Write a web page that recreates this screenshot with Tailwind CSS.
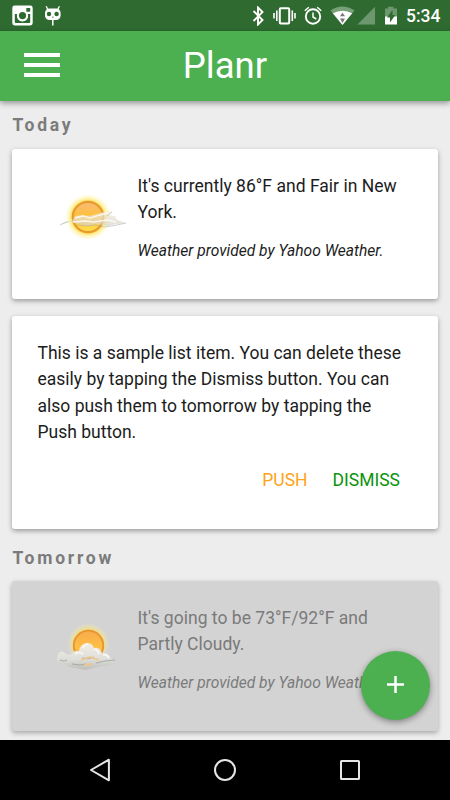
<!DOCTYPE html>
<html lang="en">
<head>
<meta charset="utf-8">
<title>Planr</title>
<script src="https://cdn.jsdelivr.net/npm/@tailwindcss/browser@4"></script>
</head>
<body class="overflow-hidden bg-black font-[Roboto,sans-serif]">
<div class="relative flex h-[800px] w-[450px] flex-col overflow-hidden bg-[#ededed]">

  <!-- Status bar -->
  <div class="flex h-[31px] shrink-0 items-center justify-between bg-[#2f6b31] pr-[10px] pl-3 text-white">
    <div class="flex items-center gap-[11px]">
      <svg class="h-[21px] w-[21px]" viewBox="0 0 21 21">
        <rect x="0.3" y="0.5" width="20.4" height="20" rx="2.4" fill="#fff"/>
        <path d="M2.8 9h2.8a5.3 5.3 0 1 0 9.8 0h2.8v8.1a1 1 0 0 1-1 1H3.800a1 1 0 0 1-1-1z" fill="#2f6b31"/>
        <circle cx="10.5" cy="10.800" r="5.600" fill="#fff"/>
        <circle cx="10.500" cy="10.600" r="3.600" fill="#2f6b31"/>
        <rect x="14.300" y="3" width="3.900" height="3.700" rx=".5" fill="#2f6b31"/>
      </svg>
      <svg class="h-[21px] w-[18px]" viewBox="0 0 18 21">
        <path d="M2.200 1.200l2 4M15.400 1.200l-2 4" stroke="#fff" stroke-width="1.300" fill="none"/>
        <rect x="1" y="3.500" width="15.600" height="11.500" rx="4.500" fill="#fff"/>
        <path d="M8.800 14v6.400" stroke="#fff" stroke-width="1.500"/>
        <circle cx="5" cy="9" r="2.200" fill="#2f6b31"/>
        <circle cx="12.600" cy="9" r="2.200" fill="#2f6b31"/>
        <path d="M8 12.200h1.600" stroke="#2f6b31" stroke-width=".8"/>
      </svg>
    </div>
    <div class="flex items-center">
      <svg class="h-[20px] w-[146px]" viewBox="252 6 146 20">
        <path d="M253.500 11l9 9-4.500 4.500V7.500l4.500 4.500-9 9" fill="none" stroke="#fff" stroke-width="1.900"/>
        <rect x="279.800" y="8.300" width="9.400" height="15.200" rx="1" fill="none" stroke="#fff" stroke-width="2"/>
        <path d="M276.800 10.500v10.500M274 13v5.500M292.300 10.500v10.500M295 13v5.500" stroke="#fff" stroke-width="1.600"/>
        <circle cx="313" cy="16.500" r="7.200" fill="none" stroke="#fff" stroke-width="1.900"/>
        <path d="M313 12.500v4.500l3.300 2M304.800 10.700l4-3.500M321.200 10.700l-4-3.500" fill="none" stroke="#fff" stroke-width="1.500"/>
        <path d="M330.500 10.500q12-8 24 0L342.500 25z" fill="#779f78"/>
        <path d="M332.800 13.300q9.700-5.200 19.400 0L342.500 25z" fill="#fff"/>
        <path d="M342.500 12.800l2.500 3.500h-5zM342.500 23l2.500-4.500h-5z" fill="#777"/>
        <path d="M375 6.800V24.500H357.500z" fill="#6d976f"/>
        <path d="M388 6.800h5.500v1.700h3.500V17h-12V8.500h3z" fill="#6d976f"/>
        <path d="M385 16.500h12V24.500h-12z" fill="#fff"/>
        <path d="M392.500 10l-5.500 7.500h3v5l5.300-7.500h-2.800z" fill="#2f6b31"/>
      </svg>
      <span class="ml-[8px] w-[34px] text-[17.5px] leading-5 font-medium whitespace-nowrap">5:34</span>
    </div>
  </div>

  <!-- App bar -->
  <header class="relative z-10 grid h-[70px] shrink-0 grid-cols-[1fr_auto_1fr] items-center bg-[#4caf50] px-6 text-white shadow-[0_2px_6px_rgba(0,0,0,0.4)]">
    <button class="mb-[2px] flex w-9 flex-col gap-[6px]" aria-label="Menu">
      <span class="h-1 w-full bg-white"></span>
      <span class="h-1 w-full bg-white"></span>
      <span class="h-1 w-full bg-white"></span>
    </button>
    <h1 class="text-[36.5px] leading-[44px]">Planr</h1>
  </header>

  <!-- Agenda -->
  <main class="flex min-h-0 flex-1 flex-col pr-[12.5px] pl-3">
    <h2 class="mt-[14px] h-[20px] pl-[0.5px] text-[17.5px] leading-[20px] font-bold tracking-[2.75px] text-[#7b7b7b]">Today</h2>
    <section class="mt-[13.5px] flex h-[150px] shrink-0 rounded-[3px] bg-white pt-[24px] text-[#1c1c1c] shadow-[0_2px_5px_rgba(0,0,0,0.35)]">
      <svg class="mt-[9px] ml-[40.5px] h-[64px] w-[85px] shrink-0" viewBox="52 182 85 64">
        <defs>
          <radialGradient id="glow"><stop offset=".68" stop-color="#ffd93c"/><stop offset=".8" stop-color="#ffec80" stop-opacity=".65"/><stop offset="1" stop-color="#fff4a0" stop-opacity="0"/></radialGradient>
          <linearGradient id="sun" x1="0" y1="0" x2="0" y2="1"><stop offset="0" stop-color="#f8b878"/><stop offset=".5" stop-color="#ffc338"/><stop offset="1" stop-color="#ffe04e"/></linearGradient>
          <linearGradient id="haze" x1="0" y1="0" x2="0" y2="1"><stop offset="0" stop-color="#f5eedc"/><stop offset="1" stop-color="#d4d0c8"/></linearGradient>
          <filter id="soft" x="-20%" y="-40%" width="140%" height="180%"><feGaussianBlur stdDeviation=".6"/></filter>
        </defs>
        <circle cx="87" cy="217" r="23" fill="url(#glow)"/>
        <circle cx="87" cy="217" r="15.200" fill="url(#sun)" stroke="#e69a30" stroke-width="2.200"/>
        <g filter="url(#soft)">
          <path d="M59 224l7-3 5 0 3-5 8-1 6 1 8-2 7-2 9-1-5 4 7 1 2 4 9 3-10 1-8 2-11-2-10 2-8-2-8-2-6 1z" fill="url(#haze)" opacity=".7"/>
          <path d="M74 218l8-2 7 2 10-3 8-2M72 222l12-1 9 1 13-2 9 2" fill="none" stroke="#fff" stroke-width="1.300" opacity=".8"/>
          <path d="M59 225l7-3M76 225l10 1 8-1 9 2 8-1 14-3M111 212l-5 4" fill="none" stroke="#aaa9a5" stroke-width=".8" opacity=".7"/>
        </g>
      </svg>
      <div class="whitespace-nowrap">
        <p class="text-[17.5px] leading-[26.25px] tracking-[0.02px]">It's currently 86°F and Fair in New<br>York.</p>
        <p class="mt-[12.5px] text-[15.6px] leading-[26.25px] italic">Weather provided by Yahoo Weather.</p>
      </div>
    </section>

    <section class="mt-[17.5px] flex h-[212.5px] shrink-0 flex-col rounded-[3px] bg-white px-[25.5px] pt-[24px] text-[#1c1c1c] shadow-[0_2px_5px_rgba(0,0,0,0.35)]">
      <p class="text-[17.5px] leading-[26.25px] whitespace-nowrap">This is a sample list item. You can delete these<br>easily by tapping the Dismiss button. You can<br>also push them to tomorrow by tapping the<br>Push button.</p>
      <div class="mt-[22px] mr-[12px] flex justify-end gap-[25px] text-[17.5px] leading-[26.25px]">
        <button class="text-[#ffa31a]">PUSH</button>
        <button class="text-[#0b930b]">DISMISS</button>
      </div>
    </section>

    <h2 class="mt-[19px] h-[20px] pl-[0.5px] text-[17.5px] leading-[20px] font-bold tracking-[2.75px] text-[#7b7b7b]">Tomorrow</h2>
    <section class="mt-[13px] flex h-[150px] shrink-0 rounded-[3px] bg-[#d3d3d3] pt-[24px] text-[#7a7a7a] shadow-[0_2px_5px_rgba(0,0,0,0.3)]">
      <svg class="mt-[9px] ml-[40.5px] h-[64px] w-[85px] shrink-0" viewBox="52 615 85 64">
        <defs>
          <linearGradient id="sun2" x1="0" y1="0" x2="0" y2="1"><stop offset="0" stop-color="#f5ab4c"/><stop offset=".6" stop-color="#ffc044"/><stop offset="1" stop-color="#f3962c"/></linearGradient>
          <linearGradient id="cloud" x1="0" y1="0" x2="0" y2="1"><stop offset="0" stop-color="#f5eee3"/><stop offset=".6" stop-color="#dededb"/><stop offset="1" stop-color="#bdbdba"/></linearGradient>
        </defs>
        <circle cx="87.500" cy="645" r="21" fill="url(#glow)" opacity=".65"/>
        <circle cx="87.500" cy="646.500" r="14.800" fill="url(#sun2)" stroke="#e9942d" stroke-width="1.800"/>
        <g filter="url(#soft)" transform="translate(5 -1)">
          <path d="M52 657q1-5 6-3 2 4 8 2 2-4 7-3 1-7 8-8 5 0 7 5 6-1 8 5 6-1 8 4l6 7-6 1-8 1-9 2-8 2-9-2-7-1-6-5-4 1q-4-3-1-8z" fill="url(#cloud)"/>
          <path d="M77 650q1-4 5-4M69 656q4-3 8 0M88 651q4 1 5 5M97 657q4-1 6 3" stroke="#fff" stroke-width="1.600" fill="none" opacity=".8"/>
          <path d="M54 662q4 2 7 0M66 666l8 1 6-1M90 665l9-2 10-1M76 660q7 2 12-1" stroke="#979797" stroke-width="1" fill="none" opacity=".7"/>
          <path d="M75 662l9-3 9 3M78 667l8-1" stroke="#f4c47b" stroke-width="1.800" fill="none" opacity=".8"/>
        </g>
      </svg>
      <div class="whitespace-nowrap">
        <p class="text-[17.5px] leading-[26.25px] tracking-[0.02px]">It's going to be 73°F/92°F and<br>Partly Cloudy.</p>
        <p class="mt-[12.5px] text-[15.6px] leading-[26.25px] italic">Weather provided by Yahoo Weather.</p>
      </div>
    </section>
  </main>

  <!-- Floating action button -->
  <button class="absolute top-[651px] left-[361px] flex h-[69px] w-[69px] items-center justify-center rounded-full bg-[#4caf50] shadow-[0_2px_6px_rgba(0,0,0,0.4)]" aria-label="Add">
    <svg class="mb-[2px] h-[17px] w-[17px]" viewBox="0 0 17 17"><path d="M8.500 0v17M0 8.500h17" stroke="#fff" stroke-width="2.500"/></svg>
  </button>

  <!-- Navigation bar -->
  <nav class="flex h-[60px] shrink-0 items-center justify-between bg-black px-[88px]">
    <svg class="h-6 w-6" viewBox="0 0 24 24"><path d="M3 12L20.900 1.700v20.600z" fill="none" stroke="#e6e6e6" stroke-width="2" stroke-linejoin="round"/></svg>
    <svg class="h-6 w-6" viewBox="0 0 24 24"><circle cx="12" cy="12" r="10" fill="none" stroke="#e6e6e6" stroke-width="2"/></svg>
    <svg class="h-6 w-6" viewBox="0 0 24 24"><rect x="3" y="3" width="18" height="18" rx=".6" fill="none" stroke="#e6e6e6" stroke-width="2"/></svg>
  </nav>
</div>
</body>
</html>
